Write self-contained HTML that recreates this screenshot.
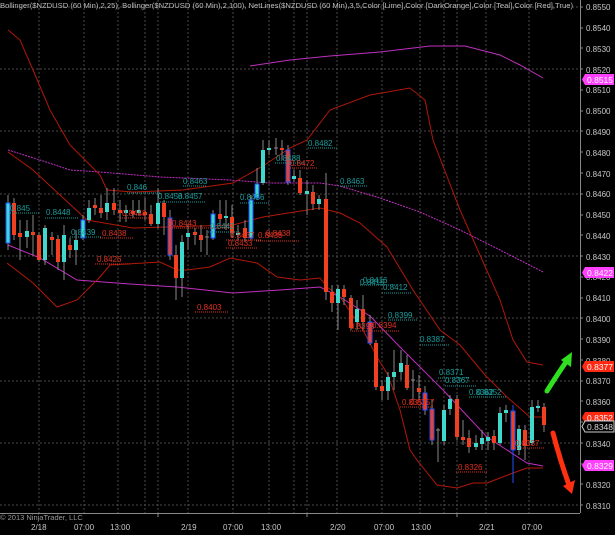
<!DOCTYPE html><html><head><meta charset="utf-8"><style>
html,body{margin:0;padding:0;background:#000;width:615px;height:535px;overflow:hidden}
svg{display:block;font-family:"Liberation Sans",sans-serif}
</style></head><body>
<svg width="615" height="535" viewBox="0 0 615 535" xmlns="http://www.w3.org/2000/svg">
<rect width="615" height="535" fill="#000"/>
<g stroke="#4a4a4a" stroke-width="1" stroke-dasharray="2 2">
<line x1="0" y1="7" x2="580" y2="7"/><line x1="0" y1="69" x2="580" y2="69"/><line x1="0" y1="131" x2="580" y2="131"/><line x1="0" y1="194" x2="580" y2="194"/><line x1="0" y1="256" x2="580" y2="256"/><line x1="0" y1="318" x2="580" y2="318"/><line x1="0" y1="381" x2="580" y2="381"/><line x1="0" y1="443" x2="580" y2="443"/><line x1="0" y1="505" x2="580" y2="505"/>
<line x1="39" y1="0" x2="39" y2="513"/><line x1="84" y1="0" x2="84" y2="513"/><line x1="118" y1="0" x2="118" y2="513"/><line x1="145" y1="0" x2="145" y2="513"/><line x1="158" y1="0" x2="158" y2="513"/><line x1="188" y1="0" x2="188" y2="513"/><line x1="233" y1="0" x2="233" y2="513"/><line x1="269" y1="0" x2="269" y2="513"/><line x1="294" y1="0" x2="294" y2="513"/><line x1="307" y1="0" x2="307" y2="513"/><line x1="337" y1="0" x2="337" y2="513"/><line x1="382" y1="0" x2="382" y2="513"/><line x1="420" y1="0" x2="420" y2="513"/><line x1="444" y1="0" x2="444" y2="513"/><line x1="457" y1="0" x2="457" y2="513"/><line x1="486" y1="0" x2="486" y2="513"/><line x1="529" y1="0" x2="529" y2="513"/>
</g>
<line x1="580.5" y1="0" x2="580.5" y2="513" stroke="#888"/>
<line x1="0" y1="513.5" x2="580" y2="513.5" stroke="#888"/>
<g fill="#c8c8c8" font-size="8">
<text x="586" y="10">0.8550</text><text x="586" y="31">0.8540</text><text x="586" y="52">0.8530</text><text x="586" y="73">0.8520</text><text x="586" y="93">0.8510</text><text x="586" y="114">0.8500</text><text x="586" y="135">0.8490</text><text x="586" y="156">0.8480</text><text x="586" y="177">0.8470</text><text x="586" y="197">0.8460</text><text x="586" y="218">0.8450</text><text x="586" y="239">0.8440</text><text x="586" y="260">0.8430</text><text x="586" y="280">0.8420</text><text x="586" y="301">0.8410</text><text x="586" y="322">0.8400</text><text x="586" y="343">0.8390</text><text x="586" y="364">0.8380</text><text x="586" y="384">0.8370</text><text x="586" y="405">0.8360</text><text x="586" y="426">0.8350</text><text x="586" y="447">0.8340</text><text x="586" y="468">0.8330</text><text x="586" y="488">0.8320</text><text x="586" y="509">0.8310</text>
<text x="31" y="530">2/18</text><text x="74" y="530">07:00</text><text x="110" y="530">13:00</text><text x="181" y="530">2/19</text><text x="223" y="530">07:00</text><text x="261" y="530">13:00</text><text x="330" y="530">2/20</text><text x="374" y="530">07:00</text><text x="411" y="530">13:00</text><text x="479" y="530">2/21</text><text x="522" y="530">07:00</text>
</g>
<g stroke="#888"><line x1="580" y1="7" x2="583" y2="7"/><line x1="580" y1="28" x2="583" y2="28"/><line x1="580" y1="48" x2="583" y2="48"/><line x1="580" y1="69" x2="583" y2="69"/><line x1="580" y1="90" x2="583" y2="90"/><line x1="580" y1="111" x2="583" y2="111"/><line x1="580" y1="131" x2="583" y2="131"/><line x1="580" y1="152" x2="583" y2="152"/><line x1="580" y1="173" x2="583" y2="173"/><line x1="580" y1="194" x2="583" y2="194"/><line x1="580" y1="215" x2="583" y2="215"/><line x1="580" y1="235" x2="583" y2="235"/><line x1="580" y1="256" x2="583" y2="256"/><line x1="580" y1="277" x2="583" y2="277"/><line x1="580" y1="298" x2="583" y2="298"/><line x1="580" y1="318" x2="583" y2="318"/><line x1="580" y1="339" x2="583" y2="339"/><line x1="580" y1="360" x2="583" y2="360"/><line x1="580" y1="381" x2="583" y2="381"/><line x1="580" y1="401" x2="583" y2="401"/><line x1="580" y1="422" x2="583" y2="422"/><line x1="580" y1="443" x2="583" y2="443"/><line x1="580" y1="464" x2="583" y2="464"/><line x1="580" y1="484" x2="583" y2="484"/><line x1="580" y1="505" x2="583" y2="505"/>
<line x1="158" y1="513" x2="158" y2="517"/><line x1="307" y1="513" x2="307" y2="517"/><line x1="457" y1="513" x2="457" y2="517"/></g>
<text x="0" y="8" fill="#bbb" font-size="7.4" textLength="573" lengthAdjust="spacingAndGlyphs">Bollinger($NZDUSD (60 Min),2,25), Bollinger($NZDUSD (60 Min),2,100), NetLines($NZDUSD (60 Min),3,5,Color [Lime],Color [DarkOrange],Color [Teal],Color [Red],True)</text>
<text x="0" y="520" fill="#999" font-size="7.5">© 2013 NinjaTrader, LLC</text>
<g fill="none" stroke-width="1">
<polyline stroke="#c030c0" points="250,66 290,60 330,56 380,52 430,46 465,46 500,55 520,65 543,78"/>
<polyline stroke="#c030c0" stroke-dasharray="2 1" points="8,150 40,160 70,170 100,172 160,177 230,180 270,183 320,183 340,186 380,198 420,212 460,230 500,250 543,272"/>
<polyline stroke="#c030c0" points="8,245 40,258 77,280 130,284 177,287 233,293 280,290 320,287 340,297 370,316 400,347 443,390 487,437 527,463 543,466"/>
<polyline stroke="#b01808" points="8,30 20,40 33,70 50,110 70,145 90,165 100,175 107,190 133,192 183,190 233,183 263,166 290,148 307,140 330,110 370,95 410,88 425,100 433,140 460,210 480,255 500,300 513,340 527,362 543,365"/>
<polyline stroke="#b01808" points="8,152 33,170 60,195 87,220 133,228 233,225 263,217 320,208 340,213 360,223 387,247 413,290 440,330 460,345 485,375 507,397 530,417 543,417"/>
<polyline stroke="#b01808" points="7,263 33,283 57,307 77,300 100,277 110,265 160,262 177,270 187,270 210,267 230,258 257,263 277,277 300,280 320,278 327,287 340,297 363,330 377,357 388,375 400,410 410,450 417,460 437,485 457,488 473,483 487,483 500,478 513,473 527,468 543,468"/>
</g>
<g stroke="#888" stroke-width="1">
<line x1="8" y1="195" x2="8" y2="250"/><line x1="14" y1="198" x2="14" y2="240"/><line x1="20" y1="220" x2="20" y2="260"/><line x1="27" y1="220" x2="27" y2="248"/><line x1="33" y1="215" x2="33" y2="255"/><line x1="39" y1="232" x2="39" y2="262"/><line x1="45" y1="225" x2="45" y2="265"/><line x1="52" y1="232" x2="52" y2="255"/><line x1="58" y1="235" x2="58" y2="270"/><line x1="64" y1="225" x2="64" y2="280"/><line x1="70" y1="238" x2="70" y2="258"/><line x1="76" y1="230" x2="76" y2="265"/><line x1="83" y1="215" x2="83" y2="240"/><line x1="89" y1="200" x2="89" y2="223"/><line x1="95" y1="198" x2="95" y2="215"/><line x1="101" y1="195" x2="101" y2="218"/><line x1="107" y1="188" x2="107" y2="220"/><line x1="114" y1="188" x2="114" y2="215"/><line x1="120" y1="200" x2="120" y2="222"/><line x1="126" y1="205" x2="126" y2="222"/><line x1="133" y1="200" x2="133" y2="218"/><line x1="139" y1="200" x2="139" y2="216"/><line x1="145" y1="198" x2="145" y2="220"/><line x1="151" y1="205" x2="151" y2="226"/><line x1="158" y1="188" x2="158" y2="228"/><line x1="164" y1="200" x2="164" y2="235"/><line x1="170" y1="210" x2="170" y2="260"/><line x1="176" y1="245" x2="176" y2="300"/><line x1="182" y1="235" x2="182" y2="297"/><line x1="188" y1="225" x2="188" y2="250"/><line x1="195" y1="228" x2="195" y2="245"/><line x1="201" y1="225" x2="201" y2="252"/><line x1="207" y1="230" x2="207" y2="255"/><line x1="213" y1="210" x2="213" y2="240"/><line x1="220" y1="200" x2="220" y2="225"/><line x1="226" y1="200" x2="226" y2="230"/><line x1="232" y1="205" x2="232" y2="238"/><line x1="238" y1="225" x2="238" y2="240"/><line x1="245" y1="220" x2="245" y2="242"/><line x1="251" y1="195" x2="251" y2="240"/><line x1="257" y1="168" x2="257" y2="200"/><line x1="263" y1="140" x2="263" y2="185"/><line x1="269" y1="140" x2="269" y2="155"/><line x1="276" y1="138" x2="276" y2="155"/><line x1="282" y1="140" x2="282" y2="160"/><line x1="288" y1="145" x2="288" y2="185"/><line x1="294" y1="170" x2="294" y2="182"/><line x1="300" y1="170" x2="300" y2="195"/><line x1="307" y1="180" x2="307" y2="215"/><line x1="313" y1="185" x2="313" y2="210"/><line x1="319" y1="195" x2="319" y2="210"/><line x1="326" y1="173" x2="326" y2="300"/><line x1="332" y1="285" x2="332" y2="312"/><line x1="338" y1="285" x2="338" y2="330"/><line x1="344" y1="285" x2="344" y2="305"/><line x1="351" y1="295" x2="351" y2="330"/><line x1="357" y1="300" x2="357" y2="330"/><line x1="363" y1="295" x2="363" y2="330"/><line x1="370" y1="315" x2="370" y2="345"/><line x1="376" y1="340" x2="376" y2="390"/><line x1="382" y1="380" x2="382" y2="400"/><line x1="388" y1="372" x2="388" y2="400"/><line x1="394" y1="350" x2="394" y2="390"/><line x1="401" y1="350" x2="401" y2="380"/><line x1="407" y1="355" x2="407" y2="390"/><line x1="413" y1="370" x2="413" y2="400"/><line x1="419" y1="375" x2="419" y2="400"/><line x1="425" y1="386" x2="425" y2="415"/><line x1="432" y1="400" x2="432" y2="445"/><line x1="438" y1="428" x2="438" y2="462"/><line x1="444" y1="405" x2="444" y2="445"/><line x1="450" y1="395" x2="450" y2="415"/><line x1="457" y1="395" x2="457" y2="440"/><line x1="463" y1="420" x2="463" y2="445"/><line x1="469" y1="430" x2="469" y2="453"/><line x1="476" y1="435" x2="476" y2="450"/><line x1="482" y1="430" x2="482" y2="450"/><line x1="488" y1="432" x2="488" y2="450"/><line x1="494" y1="430" x2="494" y2="450"/><line x1="500" y1="407" x2="500" y2="445"/><line x1="506" y1="405" x2="506" y2="422"/><line x1="513" y1="405" x2="513" y2="483" stroke="#2050ff"/><line x1="519" y1="425" x2="519" y2="455"/><line x1="525" y1="425" x2="525" y2="460"/><line x1="532" y1="400" x2="532" y2="445"/><line x1="538" y1="400" x2="538" y2="412"/><line x1="544" y1="403" x2="544" y2="432"/>
<line x1="205" y1="237" x2="209" y2="237"/><line x1="274" y1="148" x2="278" y2="148"/><line x1="411" y1="380" x2="415" y2="380"/><line x1="436" y1="430" x2="440" y2="430"/>
</g>
<g stroke-width="1">
<g fill="#40d8cc">
<rect x="6" y="203" width="4" height="40" stroke="#2050ff"/><rect x="25" y="231" width="4" height="6"/><rect x="43" y="228" width="4" height="32"/><rect x="62" y="235" width="4" height="27"/><rect x="74" y="240" width="4" height="10"/><rect x="81" y="220" width="4" height="18" stroke="#2050ff"/><rect x="87" y="208" width="4" height="12"/><rect x="105" y="203" width="4" height="9"/><rect x="124" y="210" width="4" height="3"/><rect x="137" y="210" width="4" height="3"/><rect x="156" y="203" width="4" height="21"/><rect x="180" y="242" width="4" height="36"/><rect x="186" y="233" width="4" height="4"/><rect x="211" y="214" width="4" height="24" stroke="#2050ff"/><rect x="224" y="216" width="4" height="2"/><rect x="236" y="233" width="4" height="2"/><rect x="249" y="200" width="4" height="38" stroke="#2050ff"/><rect x="255" y="184" width="4" height="14" stroke="#2050ff"/><rect x="261" y="150" width="4" height="33"/><rect x="267" y="148" width="4" height="2"/><rect x="292" y="176" width="4" height="3"/><rect x="305" y="191" width="4" height="3"/><rect x="317" y="199" width="4" height="5"/><rect x="336" y="289" width="4" height="14"/><rect x="355" y="309" width="4" height="13"/><rect x="386" y="377" width="4" height="14"/><rect x="392" y="372" width="4" height="5"/><rect x="399" y="363" width="4" height="9"/><rect x="442" y="410" width="4" height="31"/><rect x="448" y="399" width="4" height="10"/><rect x="474" y="443" width="4" height="4"/><rect x="480" y="438" width="4" height="6"/><rect x="486" y="437" width="4" height="4"/><rect x="498" y="413" width="4" height="30"/><rect x="504" y="410" width="4" height="3"/><rect x="517" y="429" width="4" height="21"/><rect x="530" y="407" width="4" height="36"/><rect x="536" y="406" width="4" height="2"/>
</g>
<g fill="#f04020">
<rect x="12" y="203" width="4" height="32"/><rect x="18" y="233" width="4" height="4"/><rect x="31" y="232" width="4" height="3"/><rect x="37" y="235" width="4" height="25"/><rect x="50" y="237" width="4" height="3"/><rect x="56" y="239" width="4" height="23"/><rect x="68" y="245" width="4" height="5"/><rect x="93" y="205" width="4" height="3"/><rect x="99" y="208" width="4" height="5"/><rect x="112" y="203" width="4" height="7"/><rect x="118" y="210" width="4" height="3"/><rect x="131" y="211" width="4" height="3"/><rect x="143" y="212" width="4" height="3"/><rect x="149" y="214" width="4" height="10"/><rect x="162" y="203" width="4" height="14"/><rect x="168" y="218" width="4" height="37" stroke="#2050ff"/><rect x="174" y="255" width="4" height="23"/><rect x="193" y="232" width="4" height="3"/><rect x="199" y="235" width="4" height="5"/><rect x="218" y="214" width="4" height="5"/><rect x="230" y="217" width="4" height="16"/><rect x="243" y="228" width="4" height="10"/><rect x="280" y="148" width="4" height="2"/><rect x="286" y="150" width="4" height="32" stroke="#2050ff"/><rect x="298" y="178" width="4" height="15"/><rect x="311" y="192" width="4" height="12"/><rect x="324" y="199" width="4" height="93"/><rect x="330" y="292" width="4" height="11"/><rect x="342" y="289" width="4" height="8"/><rect x="349" y="298" width="4" height="30"/><rect x="361" y="309" width="4" height="13"/><rect x="368" y="322" width="4" height="21" stroke="#2050ff"/><rect x="374" y="343" width="4" height="44"/><rect x="380" y="386" width="4" height="5"/><rect x="405" y="365" width="4" height="23"/><rect x="417" y="388" width="4" height="4"/><rect x="423" y="393" width="4" height="17" stroke="#2050ff"/><rect x="430" y="409" width="4" height="31" stroke="#2050ff"/><rect x="455" y="399" width="4" height="38"/><rect x="461" y="437" width="4" height="3"/><rect x="467" y="438" width="4" height="9"/><rect x="492" y="436" width="4" height="7"/><rect x="511" y="411" width="4" height="39" stroke="#2050ff"/><rect x="523" y="430" width="4" height="16"/><rect x="542" y="407" width="4" height="18"/>
</g></g>
<g stroke="#1a9c9c" stroke-dasharray="1 1"><line x1="10" y1="213" x2="40" y2="213"/><line x1="45" y1="218" x2="78" y2="218"/><line x1="70" y1="237" x2="101" y2="237"/><line x1="127" y1="193" x2="160" y2="193"/><line x1="183" y1="186" x2="207" y2="186"/><line x1="158" y1="202" x2="205" y2="202"/><line x1="208" y1="232" x2="240" y2="232"/><line x1="240" y1="203" x2="270" y2="203"/><line x1="275" y1="163" x2="305" y2="163"/><line x1="308" y1="148" x2="338" y2="148"/><line x1="340" y1="186" x2="368" y2="186"/><line x1="360" y1="285" x2="395" y2="285"/><line x1="382" y1="293" x2="412" y2="293"/><line x1="388" y1="320" x2="418" y2="320"/><line x1="420" y1="345" x2="450" y2="345"/><line x1="438" y1="378" x2="470" y2="378"/><line x1="445" y1="386" x2="476" y2="386"/><line x1="469" y1="397" x2="507" y2="397"/></g>
<g fill="#1a9c9c" font-size="8"><text x="10" y="211">0.845</text><text x="46" y="215">0.8448</text><text x="71" y="235">0.8439</text><text x="127" y="190">0.846</text><text x="183" y="184">0.8463</text><text x="158" y="199">0.8458</text><text x="178" y="199">0.8457</text><text x="210" y="229">0.8442</text><text x="240" y="200">0.8456</text><text x="276" y="161">0.8488</text><text x="308" y="146">0.8482</text><text x="340" y="184">0.8463</text><text x="363" y="283">0.8416</text><text x="360" y="285">0.8415</text><text x="383" y="290">0.8412</text><text x="388" y="318">0.8399</text><text x="420" y="342">0.8387</text><text x="439" y="375">0.8371</text><text x="445" y="383">0.8367</text><text x="469" y="395">0.8362</text><text x="477" y="395">0.8352</text></g>
<g stroke="#e03020" stroke-dasharray="1 1"><line x1="120" y1="218" x2="152" y2="218"/><line x1="100" y1="238" x2="133" y2="238"/><line x1="95" y1="264" x2="130" y2="264"/><line x1="172" y1="228" x2="230" y2="228"/><line x1="195" y1="312" x2="228" y2="312"/><line x1="226" y1="240" x2="262" y2="240"/><line x1="226" y1="248" x2="258" y2="248"/><line x1="256" y1="241" x2="300" y2="241"/><line x1="290" y1="168" x2="318" y2="168"/><line x1="350" y1="331" x2="400" y2="331"/><line x1="400" y1="407" x2="433" y2="407"/><line x1="456" y1="472" x2="488" y2="472"/><line x1="515" y1="448" x2="545" y2="448"/></g>
<g fill="#e03020" font-size="8"><text x="122" y="216">0.8448</text><text x="102" y="236">0.8438</text><text x="97" y="262">0.8426</text><text x="172" y="226">0.8443</text><text x="197" y="310">0.8403</text><text x="230" y="238">0.8437</text><text x="228" y="246">0.8433</text><text x="258" y="238">0.8438</text><text x="266" y="236">0.8438</text><text x="290" y="166">0.8472</text><text x="350" y="329">0.8398</text><text x="372" y="328">0.8394</text><text x="402" y="405">0.8357</text><text x="410" y="405">0.8357</text><text x="458" y="470">0.8326</text><text x="515" y="446">0.8337</text></g>
<g font-size="8.5">
<path d="M585,74 h29 v11 h-29 l-3,-5.5z" fill="#ff40ff"/><text x="587" y="83" fill="#fff">0.8515</text>
<path d="M585,267 h29 v11 h-29 l-3,-5.5z" fill="#ff40ff"/><text x="587" y="276" fill="#fff">0.8422</text>
<path d="M585,361 h29 v11 h-29 l-3,-5.5z" fill="#ff2810"/><text x="587" y="370" fill="#fff">0.8377</text>
<path d="M585,412 h29 v11 h-29 l-3,-5.5z" fill="#ff2810"/><text x="587" y="421" fill="#fff">0.8352</text>
<path d="M585,421 h29 v11 h-29 l-3,-5.5z" fill="#000" stroke="#ccc"/><text x="587" y="430" fill="#ddd">0.8348</text>
<path d="M585,460 h29 v11 h-29 l-3,-5.5z" fill="#ff40ff"/><text x="587" y="469" fill="#fff">0.8329</text>
</g>
<g stroke-linecap="round" fill="none" stroke-width="5">
<path d="M547,391 Q555,378 566,362" stroke="#30e020"/>
<path d="M553,433 Q560,460 569,485" stroke="#ff3010"/>
</g>
<path d="M561,360 L572,352 L571,367 Z" fill="#30e020"/>
<path d="M563,486 L572,494 L575,480 Z" fill="#ff3010"/>
</svg>
</body></html>
